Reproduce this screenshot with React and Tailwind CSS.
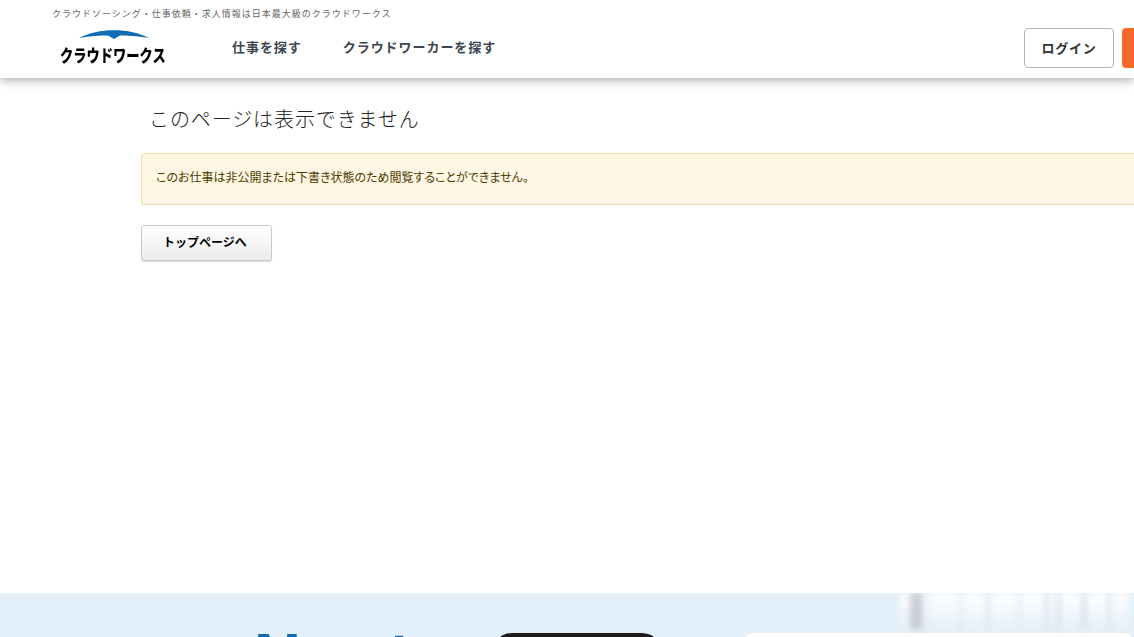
const jp = '"Noto Sans CJK JP", "Noto Sans", sans-serif';

function Header() {
	return (
		<header className="relative z-10 h-[78px] shrink-0 bg-white shadow-[0_2px_10px_rgba(0,0,0,0.35)]">
			<p className="pl-[52px] pt-[7px] text-[9px] leading-[14px] tracking-[1px] text-[#666]">
				クラウドソーシング・仕事依頼・求人情報は日本最大級のクラウドワークス
			</p>
			<div className="flex items-center pl-[60px] pt-[7px]">
				{/* logo */}
				<div className="mb-[3px] flex w-[172px] flex-col items-start gap-[8px]">
					<svg width="108" height="9" viewBox="0 0 108 9" className="block">
						<path d="M19 8 C38 -2.500 70 -2.500 89 8 C76 6 66 5.500 60 5.500 L54 9 L48 5.500 C40 5.500 30 6 19 8 Z" fill="#0f6cb5" />
					</svg>
					<span className="block origin-left scale-x-[0.78] text-[17px] leading-[16px] font-black whitespace-nowrap text-black">
						クラウドワークス
					</span>
				</div>
				<nav className="mb-[2px] flex gap-[41px] text-[13px] font-bold tracking-[0.95px] text-[#3c4650]">
					<a>仕事を探す</a>
					<a>クラウドワーカーを探す</a>
				</nav>
				<div className="ml-auto flex items-center gap-2">
					<button className="h-10 w-[90px] rounded border border-[#b5b5b5] bg-white pb-[1px] text-[13px] font-bold tracking-[0.06em] text-[#333]">
						ログイン
					</button>
					<div className="h-10 w-3 rounded-l bg-[#f5692d]" />
				</div>
			</div>
		</header>
	);
}

function Footer() {
	return (
		<section className="relative h-[44px] shrink-0 overflow-hidden bg-[#e4f0f9]">
			<div className="flex items-start pt-[40px]">
				<div className="-mt-[12px] ml-[252px] w-[240px] text-[68px] leading-none font-bold tracking-[3px] text-[#0f6cb5]">Next</div>
				<div className="h-10 w-[170px] rounded-t-[20px] bg-[#1c1c1c]" />
				<div className="ml-[83px] h-10 w-[387px] rounded-t-lg bg-white" />
			</div>
			{/* blurred photo strip */}
			<div className="absolute top-0 left-[900px] h-[36px] w-[228px] bg-gradient-to-b from-white to-white/10 blur-[3px]">
				<div className="flex h-full items-stretch">
					<div className="ml-[10px] w-[13px] bg-[#b9b9c6]/70" />
					<div className="ml-[6px] w-[3px] bg-[#cfd6e2]/30" />
					<div className="ml-[27px] w-[4px] bg-[#cfd6e2]/40" />
					<div className="ml-[23px] w-[4px] bg-[#cfd6e2]/60" />
					<div className="ml-[27px] w-[4px] bg-[#cfd6e2]/40" />
					<div className="ml-[23px] w-[5px] bg-[#cfd6e2]/60" />
					<div className="ml-[7px] w-[5px] bg-[#cfd6e2]/60" />
					<div className="ml-[20px] w-[6px] bg-[#cfd6e2]/60" />
					<div className="ml-[20px] w-[5px] bg-[#cfd6e2]/50" />
				</div>
			</div>
		</section>
	);
}

export default function App() {
	return (
		<div className="flex h-[637px] w-[1134px] flex-col overflow-hidden bg-white" style={{ fontFamily: jp }}>
			<Header />
			<main className="flex-1 pl-[141px]">
				<h1 className="pt-[26px] pl-[8px] text-[20px] leading-[30px] font-light tracking-[0.045em] text-[#222]">
					このページは表示できません
				</h1>
				<div className="mt-[19px] w-[1100px] rounded-[3px] border border-[#ecdfa9] bg-[#fff6e3] pt-[13px] pb-[17px] pl-[14px] text-[12px] leading-[20px] text-[#4a3b00] [font-feature-settings:'palt']">
					このお仕事は非公開または下書き状態のため閲覧することができません。
				</div>
				<button className="mt-[20px] h-9 w-[131px] rounded-[3px] border border-[#c8c8c8] bg-gradient-to-b from-white to-[#ececec] pr-[3px] pb-[2px] text-[12px] font-bold text-black shadow-[0_1px_1px_rgba(0,0,0,0.15)]">
					トップページへ
				</button>
			</main>
			<Footer />
		</div>
	);
}
